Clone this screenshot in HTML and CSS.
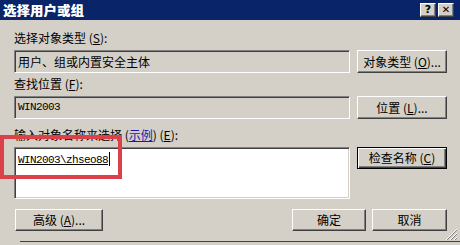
FILE: index.html
```html
<!DOCTYPE html>
<html lang="zh-CN">
<head>
  <meta charset="UTF-8">
  <title>选择用户或组</title>
  <link rel="stylesheet" href="styles.css">
</head>
<body>

  <div class="dialog">
    <div class="titlebar">
      <span class="title">选择用户或组</span>
      <div class="caption-btns">
        <span class="cap-btn">?</span>
        <span class="cap-btn close">✕</span>
      </div>
    </div>

    <div class="content">
      <div class="label first">选择对象类型 (<u>S</u>):</div>
      <div class="row">
        <div class="field readonly">用户、组或内置安全主体</div>
        <div class="btn">对象类型 (<u>O</u>)...</div>
      </div>

      <div class="label second">查找位置 (<u>F</u>):</div>
      <div class="row">
        <div class="field readonly mono">WIN2003</div>
        <div class="btn">位置 (<u>L</u>)...</div>
      </div>

      <div class="label third">输入对象名称来选择 (<a href="#">示例</a>) (<u>E</u>):</div>
      <div class="row">
        <div class="field names mono"><span class="resolved">WIN2003\zhseo88</span><span class="caret"></span></div>
        <div class="btn default">检查名称 (<u>C</u>)</div>
      </div>

      <div class="actions">
        <div class="btn advanced">高级 (<u>A</u>)...</div>
        <div class="btn ok">确定</div>
        <div class="btn cancel">取消</div>
      </div>
    </div>

    <svg class="grip" width="13" height="13" viewBox="0 0 13 13">
      <path d="M12 1 L1 12 M12 5 L5 12 M12 9 L9 12" stroke="#fff" stroke-width="1"/>
      <path d="M12 2 L2 12 M12 6 L6 12 M12 10 L10 12" stroke="#808080" stroke-width="1"/>
    </svg>

    <div class="below"></div>

    <!-- annotation box drawn over the screenshot -->
    <div class="mark"></div>
  </div>

</body>
</html>
```

FILE: styles.css
```css
body {
  margin: 0;
  width: 460px;
  height: 245px;
  overflow: hidden;
  background: #d4d0c8;
  font-family: "Noto Sans CJK SC", "DejaVu Sans", sans-serif;
  font-size: 12px;
  color: #000;
}
.dialog {
  position: relative;
  width: 460px;
  height: 245px;
  display: flex;
  flex-direction: column;
  background: #d4d0c8;
}
.titlebar {
  height: 20px;
  background: #0a246a;
  display: flex;
  align-items: center;
  justify-content: space-between;
  padding: 0 6px 0 3px;
}
.title {
  color: #fff;
  font-weight: bold;
  font-size: 13px;
  line-height: 20px;
  text-shadow: 0.6px 0 #fff;
  letter-spacing: 0.5px;
}
.caption-btns {
  display: flex;
  gap: 0;
}
.cap-btn {
  width: 14px;
  height: 12px;
  background: #d4d0c8;
  border: 1px solid;
  border-color: #fff #404040 #404040 #fff;
  box-shadow: inset -1px -1px #808080;
  font-family: "DejaVu Sans", sans-serif;
  font-weight: bold;
  font-size: 11px;
  line-height: 12px;
  text-align: center;
}
.cap-btn.close {
  margin-left: 2px;
  font-size: 10px;
}
.content {
  padding: 0 13px 0 14px;
}
.label {
  height: 14px;
  line-height: 14px;
  white-space: nowrap;
}
.label.first { margin-top: 11px; }
.label.second { margin-top: 4px; }
.label.third { margin-top: 9px; }
.label a {
  color: #1a1ab0;
}
.row {
  display: flex;
  gap: 7px;
  margin-top: 5px;
}
.field {
  width: 336px;
  box-sizing: border-box;
  border: 1px solid;
  border-color: #808080 #fff #fff #808080;
  box-shadow: inset 1px 1px #404040, inset -1px -1px #d4d0c8;
  padding: 0 3px;
}
.field.readonly {
  height: 23px;
  line-height: 21px;
  background: #d4d0c8;
}
.field.names {
  height: 52px;
  background: #fff;
  padding-top: 4px;
  line-height: 14px;
}
.mono {
  font-family: "Liberation Mono", monospace;
  font-size: 11px;
  letter-spacing: -0.6px;
}
.resolved {
  text-decoration: underline;
}
.caret {
  display: inline-block;
  width: 1px;
  height: 14px;
  background: #000;
  vertical-align: -3px;
  margin-left: 1px;
}
.btn {
  width: 90px;
  height: 23px;
  box-sizing: border-box;
  background: #d4d0c8;
  border: 1px solid;
  border-color: #fff #404040 #404040 #fff;
  box-shadow: inset -1px -1px #808080, inset 1px 1px #d4d0c8;
  text-align: center;
  line-height: 21px;
  white-space: nowrap;
}
.btn.default {
  height: 22px;
  border-color: #000;
  box-shadow: inset 1px 1px #fff, inset -1px -1px #404040, inset -2px -2px #808080;
  line-height: 20px;
}
.actions {
  display: flex;
  gap: 6px;
  margin-top: 10px;
  padding-left: 1px;
}
.actions .btn {
  height: 22px;
  line-height: 20px;
}
.btn.advanced { width: 88px; }
.btn.ok { width: 74px; margin-left: auto; }
.btn.cancel { width: 75px; }
.grip {
  position: absolute;
  right: 2px;
  bottom: 4px;
}
.below {
  margin-top: auto;
  height: 3px;
  border-top: 1px solid #404040;
  background: #d4d0c8;
  margin-left: 20px;
}
.mark {
  position: absolute;
  left: 0;
  top: 135px;
  width: 122px;
  height: 44px;
  box-sizing: border-box;
  border: 4px solid #dc4048;
}
```
